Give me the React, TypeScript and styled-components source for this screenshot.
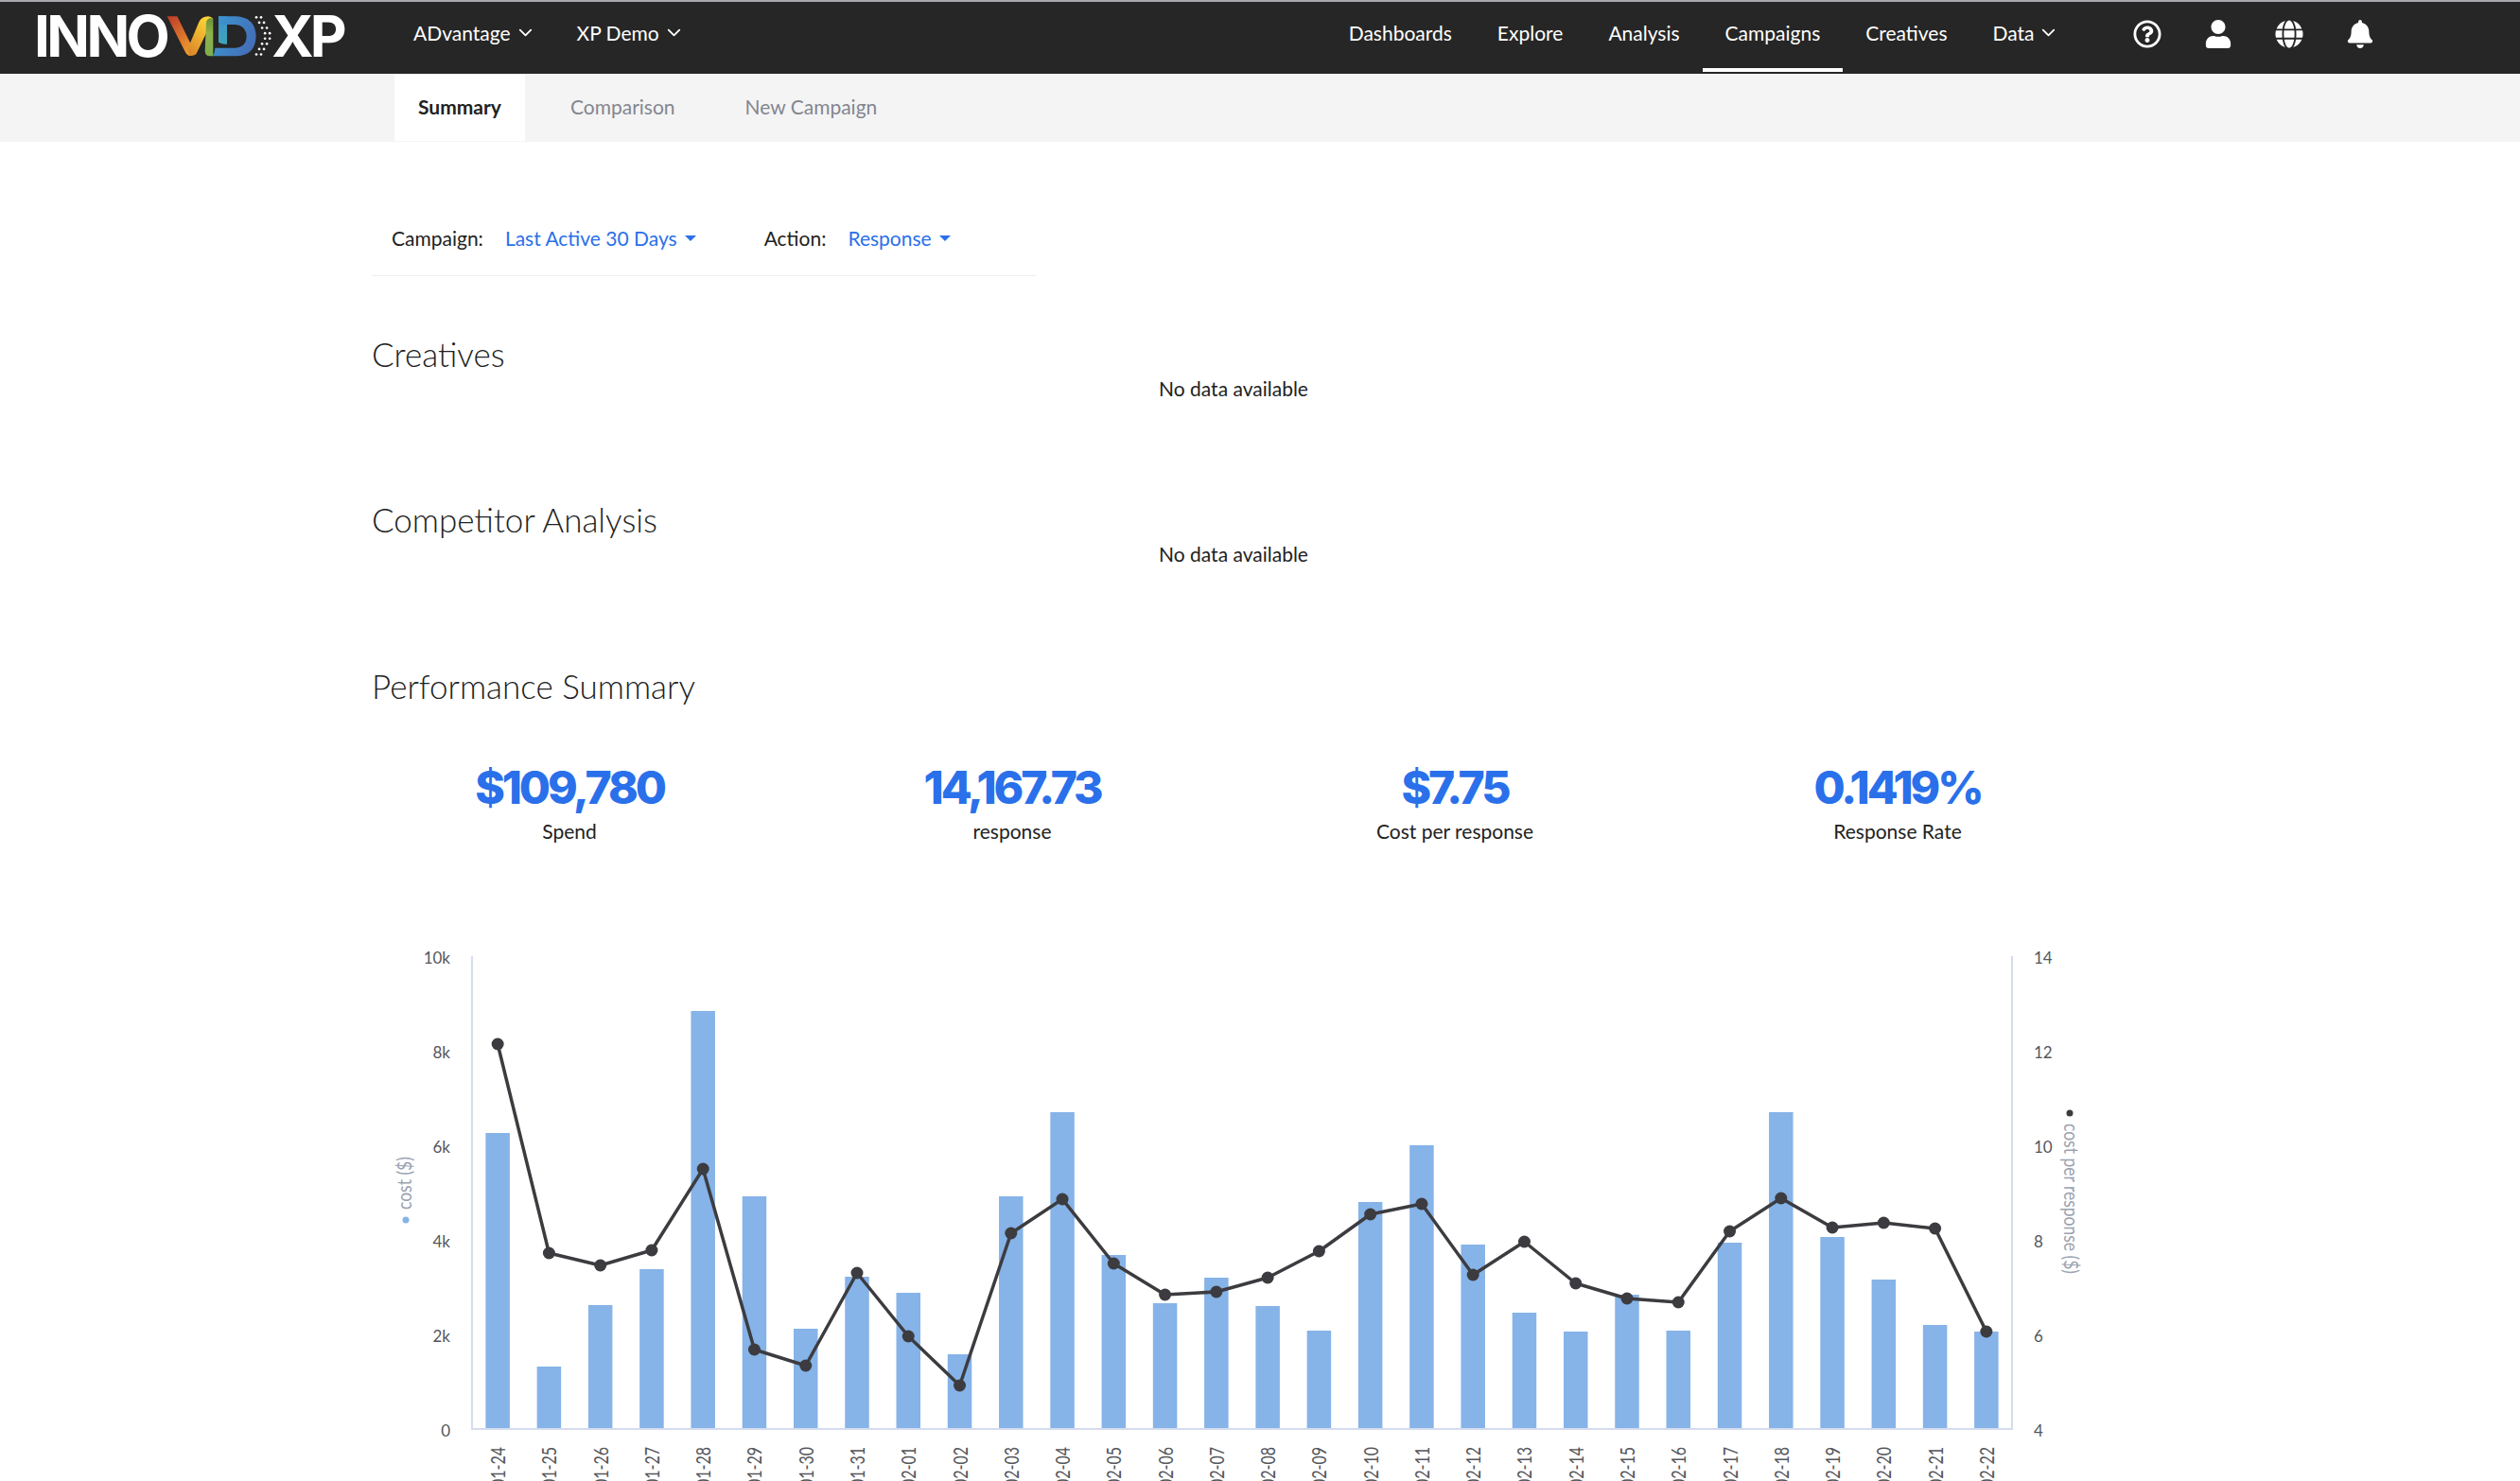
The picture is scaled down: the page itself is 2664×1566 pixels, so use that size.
import React from 'react';
import styled, { createGlobalStyle } from 'styled-components';
import { FaBell, FaGlobe, FaRegQuestionCircle, FaUser } from 'react-icons/fa';
import { ChevronDown } from 'lucide-react';

const GlobalStyle = createGlobalStyle`
  html, body {
    margin: 0;
    padding: 0;
    background: #fff;
    overflow: hidden;
  }
  body {
    font-family: Lato, "Open Sans", "Liberation Sans", sans-serif;
    color: #222;
  }
`;

const Page = styled.div`
  width: 2664px;
  height: 1566px;
  overflow: hidden;
`;

const TopBar = styled.header`
  height: 76px;
  border-top: 2px solid #a8a8ad;
  background: #262626;
  display: flex;
  align-items: stretch;
  color: #fff;
`;

const LogoWrap = styled.div`
  display: flex;
  align-items: center;
  margin: 0 0 0 36px;
  width: 377px;
  height: 72px;
  font-family: Inter, "Liberation Sans", sans-serif;
  font-weight: 700;
  font-size: 60px;
  color: #fff;
`;

const LogoText = styled.span<{ $overlap?: boolean }>`
  line-height: 60px;
  letter-spacing: -3.6px;
  margin-left: ${(p) => (p.$overlap ? '-5px' : '0')};
`;

const LogoMark = styled.svg`
  width: 116px;
  height: 45px;
  flex: none;
`;

const NavGroup = styled.nav`
  display: flex;
  align-items: stretch;
`;

const RightGroup = styled(NavGroup)`
  margin-left: 659px;
`;

const NavItem = styled.a<{ $active?: boolean }>`
  display: flex;
  align-items: center;
  height: 74px;
  padding: 0 24px 6px;
  font-size: 21px;
  color: #fff;
  box-sizing: border-box;
  border-bottom: 4px solid ${(p) => (p.$active ? '#fff' : 'transparent')};
  cursor: pointer;
`;

const Chevron = styled(ChevronDown)`
  width: 23px;
  height: 23px;
  margin: 0 -5px 0 4px;
  stroke-width: 1.9;
`;

const IconGroup = styled.div`
  display: flex;
  align-items: center;
  gap: 45px;
  height: 68px;
  margin-left: 59px;
  font-size: 30px;
`;

const IconSlot = styled.span`
  width: 30px;
  height: 30px;
  display: flex;
  align-items: center;
  justify-content: center;
`;

const SubBar = styled.div`
  height: 72px;
  background: #f4f4f4;
  padding-left: 417px;
  display: flex;
  gap: 48px;
  font-size: 21px;
`;

const SubTab = styled.a<{ $active?: boolean }>`
  display: flex;
  align-items: center;
  height: 71px;
  padding-bottom: 2px;
  box-sizing: border-box;
  padding-left: ${(p) => (p.$active ? '25px' : '0')};
  padding-right: ${(p) => (p.$active ? '25px' : '0')};
  background: ${(p) => (p.$active ? '#fff' : 'transparent')};
  color: ${(p) => (p.$active ? '#222' : '#83868f')};
  font-weight: ${(p) => (p.$active ? 700 : 400)};
  margin-right: ${(p) => (p.$active ? '0' : '26px')};
`;

const Main = styled.main`
  width: 1872px;
  margin: 0 0 0 368px;
  padding: 0 25px;
  box-sizing: border-box;
`;

const FilterBar = styled.div`
  width: 702px;
  height: 80px;
  margin-top: 62px;
  padding: 0 21px;
  box-sizing: border-box;
  display: flex;
  align-items: center;
  font-size: 21px;
  white-space: nowrap;
  border-bottom: 1px solid #eeeeee;
`;

const FilterLabel = styled.span`
  color: #222;
  margin-right: 23px;
`;

const FilterValue = styled.span`
  color: #2a70ea;
  display: flex;
  align-items: center;
  gap: 8px;
  margin-right: 72px;
`;

const Caret = styled.i`
  width: 0;
  height: 0;
  border-left: 6px solid transparent;
  border-right: 6px solid transparent;
  border-top: 6px solid #2a70ea;
`;

const Section = styled.section<{ $top: number }>`
  margin-top: ${(p) => p.$top}px;
`;

const Heading = styled.h2`
  margin: 0;
  font-size: 35px;
  line-height: 40px;
  font-weight: 300;
  color: #222;
`;

const NoData = styled.div`
  height: 29px;
  line-height: 34px;
  text-align: center;
  font-size: 21px;
  color: #222;
`;

const KpiRow = styled.div`
  display: grid;
  grid-template-columns: repeat(4, 468px);
  margin: 58px 0 0 -25px;
`;

const Kpi = styled.div`
  text-align: center;
`;

const KpiValue = styled.div`
  font-family: Inter, Lato, sans-serif;
  font-size: 48px;
  line-height: 60px;
  font-weight: 800;
  color: #2a70ea;
  letter-spacing: -3.1px;
`;

const KpiLabel = styled.div`
  margin-top: 4px;
  font-size: 21px;
  line-height: 24px;
  color: #222;
`;

const ChartSvg = styled.svg`
  display: block;
  width: 1872px;
  height: 576px;
  margin: 99px 0 0 -25px;
`;

const AxisText = styled.text`
  font-size: 17px;
  fill: #55575c;
`;

const DateText = styled.text`
  font-size: 16px;
  fill: #55575c;
`;

const AxisTitle = styled.text`
  font-size: 17.5px;
  fill: #9aa3af;
`;

const barTops = [
  1198, 1445, 1380, 1342, 1069, 1265, 1405, 1350, 1367, 1432, 1265, 1176, 1327, 1378, 1351,
  1381, 1407, 1271, 1211, 1316, 1388, 1408, 1369, 1407, 1314, 1176, 1308, 1353, 1401, 1408,
];

const lineYs = [
  1104, 1325, 1338, 1322, 1236, 1427, 1444, 1346, 1413, 1465, 1304, 1268, 1336, 1369, 1366,
  1351, 1323, 1284, 1273, 1348, 1313, 1357, 1373, 1377, 1302, 1267, 1298, 1293, 1299, 1408,
];

const dates = [
  '01-24', '01-25', '01-26', '01-27', '01-28', '01-29', '01-30', '01-31', '02-01', '02-02',
  '02-03', '02-04', '02-05', '02-06', '02-07', '02-08', '02-09', '02-10', '02-11', '02-12',
  '02-13', '02-14', '02-15', '02-16', '02-17', '02-18', '02-19', '02-20', '02-21', '02-22',
];

const axisLeft = 499;
const axisRight = 2127;
const axisTop = 1011;
const axisBottom = 1511;
const step = (axisRight - axisLeft) / 30;
const centerX = (i: number) => axisLeft + step * (i + 0.5);

const leftTicks = ['0', '2k', '4k', '6k', '8k', '10k'];
const rightTicks = ['4', '6', '8', '10', '12', '14'];
const tickY = (i: number) => axisBottom - i * 100;

const logoDots: { x: number; y: number }[] = [];
for (let i = 0; i < 8; i++) {
  const t = 1 - Math.abs(i - 3.5) / 3.5;
  const base = 303 + t * 32;
  logoDots.push({ x: base, y: 25 + i * 16.8 });
  logoDots.push({ x: base + 15, y: 25 + i * 16.8 });
}

const Logo: React.FC = () => (
  <LogoWrap>
    <LogoText>INNO</LogoText>
    <LogoMark viewBox="18 18 348 135">
      <defs>
        <linearGradient id="vLeft" x1="0" y1="0" x2="0.6" y2="1">
          <stop offset="0" stopColor="#bf3a2b" />
          <stop offset="1" stopColor="#ec9a2c" />
        </linearGradient>
        <linearGradient id="vRight" x1="0" y1="1" x2="0.6" y2="0">
          <stop offset="0" stopColor="#d97f29" />
          <stop offset="1" stopColor="#fbd335" />
        </linearGradient>
        <linearGradient id="iGreen" x1="0" y1="0" x2="0" y2="1">
          <stop offset="0" stopColor="#6f8f35" />
          <stop offset="0.4" stopColor="#8fb24a" />
          <stop offset="1" stopColor="#7fae4e" />
        </linearGradient>
        <linearGradient id="dBlue" x1="0" y1="0" x2="1" y2="0.4">
          <stop offset="0" stopColor="#3a9ad2" />
          <stop offset="1" stopColor="#4470b8" />
        </linearGradient>
        <linearGradient id="dTeal" x1="0" y1="0" x2="0" y2="1">
          <stop offset="0" stopColor="#3f90d0" />
          <stop offset="1" stopColor="#3fa6b8" />
        </linearGradient>
      </defs>
      <path d="M20 22 H52 L108 136 Q100 150 88 146 Q80 142 76 132 Z" fill="url(#vLeft)" />
      <path d="M84 128 L120 42 Q128 22 150 22 Q160 22 166 30 L112 142 Q100 150 92 146 Z" fill="url(#vRight)" />
      <path d="M166 30 Q150 22 144 40 L140 132 Q140 148 156 148 L166 148 Z" fill="url(#iGreen)" />
      <path d="M183 22 H210 V110 Q196 112 183 104 Z" fill="url(#dTeal)" />
      <path d="M183 22 H238 Q300 24 302 85 Q300 146 240 148 H165 Q172 136 172 122 H236 Q272 120 272 85 Q270 50 236 48 H183 Z" fill="url(#dBlue)" />
      {logoDots.map((d) => (
        <circle key={`${d.x}-${d.y}`} cx={d.x} cy={d.y} r="4" fill="#fff" />
      ))}
    </LogoMark>
    <LogoText $overlap>XP</LogoText>
  </LogoWrap>
);

const Chart: React.FC = () => {
  const linePoints = lineYs.map((y, i) => `${centerX(i)},${y}`).join(' ');
  return (
    <ChartSvg viewBox="368 990 1872 576">
      {barTops.map((top, i) => (
        <rect key={i} x={centerX(i) - 12.75} y={top} width={25.5} height={axisBottom - top} fill="#86b3e8" />
      ))}
      <line x1={axisLeft} y1={axisTop} x2={axisLeft} y2={axisBottom + 1} stroke="#d5dcee" strokeWidth="2" />
      <line x1={axisRight} y1={axisTop} x2={axisRight} y2={axisBottom + 1} stroke="#d5dcee" strokeWidth="2" />
      <line x1={axisLeft} y1={axisBottom} x2={axisRight} y2={axisBottom} stroke="#d5dcee" strokeWidth="2" />
      <polyline points={linePoints} fill="none" stroke="#3c3c40" strokeWidth="3.5" strokeLinejoin="round" />
      {lineYs.map((y, i) => (
        <circle key={i} cx={centerX(i)} cy={y} r="6.5" fill="#3c3c40" />
      ))}
      {leftTicks.map((t, i) => (
        <AxisText key={t} x="476" y={tickY(i) + 8} textAnchor="end">
          {t}
        </AxisText>
      ))}
      {rightTicks.map((t, i) => (
        <AxisText key={t} x="2150" y={tickY(i) + 8}>
          {t}
        </AxisText>
      ))}
      {dates.map((d, i) => (
        <DateText
          key={d}
          textAnchor="end"
          transform={`translate(${centerX(i) + 8} 1530) rotate(-90) scale(1 1.35)`}
        >
          {d}
        </DateText>
      ))}
      <circle cx="429" cy="1290" r="3.5" fill="#86b3e8" />
      <AxisTitle textAnchor="start" transform="translate(435 1279) rotate(-90) scale(1 1.25)">
        cost ($)
      </AxisTitle>
      <circle cx="2188" cy="1177" r="3.5" fill="#3c3c40" />
      <AxisTitle textAnchor="start" transform="translate(2182 1188) rotate(90) scale(1 1.25)">
        cost per response ($)
      </AxisTitle>
    </ChartSvg>
  );
};

const App: React.FC = () => (
  <Page>
    <GlobalStyle />
    <TopBar>
      <Logo />
      <NavGroup>
        <NavItem>
          ADvantage <Chevron />
        </NavItem>
        <NavItem>
          XP Demo <Chevron />
        </NavItem>
      </NavGroup>
      <RightGroup>
        <NavItem>Dashboards</NavItem>
        <NavItem>Explore</NavItem>
        <NavItem>Analysis</NavItem>
        <NavItem $active>Campaigns</NavItem>
        <NavItem>Creatives</NavItem>
        <NavItem>
          Data <Chevron />
        </NavItem>
      </RightGroup>
      <IconGroup>
        <IconSlot>
          <FaRegQuestionCircle />
        </IconSlot>
        <IconSlot>
          <FaUser />
        </IconSlot>
        <IconSlot>
          <FaGlobe />
        </IconSlot>
        <IconSlot>
          <FaBell />
        </IconSlot>
      </IconGroup>
    </TopBar>
    <SubBar>
      <SubTab $active>Summary</SubTab>
      <SubTab>Comparison</SubTab>
      <SubTab>New Campaign</SubTab>
    </SubBar>
    <Main>
      <FilterBar>
        <FilterLabel>Campaign:</FilterLabel>
        <FilterValue>
          Last Active 30 Days <Caret />
        </FilterValue>
        <FilterLabel>Action:</FilterLabel>
        <FilterValue>
          Response <Caret />
        </FilterValue>
      </FilterBar>
      <Section $top={62}>
        <Heading>Creatives</Heading>
        <NoData>No data available</NoData>
      </Section>
      <Section $top={106}>
        <Heading>Competitor Analysis</Heading>
        <NoData>No data available</NoData>
      </Section>
      <Section $top={107}>
        <Heading>Performance Summary</Heading>
        <KpiRow>
          <Kpi>
            <KpiValue>$109,780</KpiValue>
            <KpiLabel>Spend</KpiLabel>
          </Kpi>
          <Kpi>
            <KpiValue>14,167.73</KpiValue>
            <KpiLabel>response</KpiLabel>
          </Kpi>
          <Kpi>
            <KpiValue>$7.75</KpiValue>
            <KpiLabel>Cost per response</KpiLabel>
          </Kpi>
          <Kpi>
            <KpiValue>0.1419%</KpiValue>
            <KpiLabel>Response Rate</KpiLabel>
          </Kpi>
        </KpiRow>
        <Chart />
      </Section>
    </Main>
  </Page>
);

export default App;
